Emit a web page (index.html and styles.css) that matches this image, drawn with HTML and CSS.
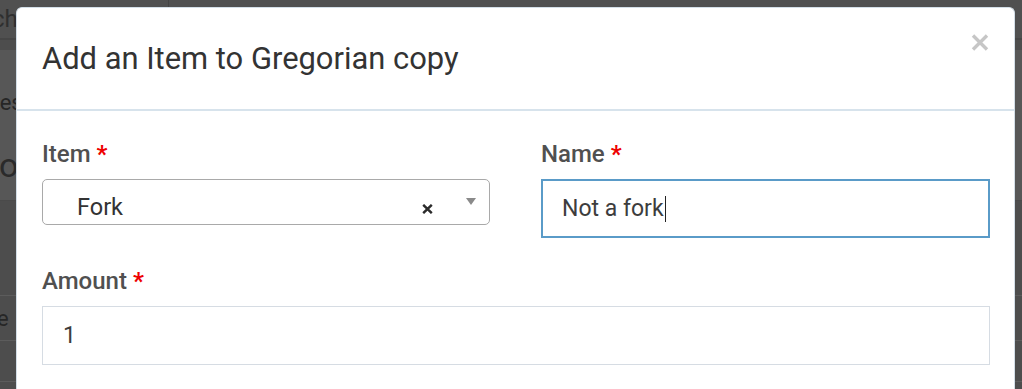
FILE: index.html
```html
<!DOCTYPE html>
<html lang="en">
<head>
<meta charset="utf-8">
<title>Add an Item</title>
<link rel="stylesheet" href="styles.css">
</head>
<body>
<div class="page">
  <div class="bg-top"><span class="bg-search">Search</span><span class="bg-divider"></span></div>
  <div class="bg-gap"></div>
  <div class="bg-band">
    <div class="bg-small">Cases</div>
    <div class="bg-big">Shop</div>
  </div>
  <div class="bg-row"></div>
  <div class="bg-row short"><span class="bg-small">Name</span></div>
  <div class="bg-row last"></div>
</div>

<div class="overlay">
  <div class="modal">
    <div class="modal-header">
      <h1 class="modal-title">Add an Item to Gregorian copy</h1>
      <button class="close" aria-label="Close">
        <svg width="18" height="17" viewBox="0 0 18 17"><path d="M2 1.5 L16 15.5 M16 1.5 L2 15.5" stroke="#c6c6c6" stroke-width="3.4" stroke-linecap="butt"/></svg>
      </button>
    </div>
    <div class="modal-body">
      <div class="form-grid">
        <div class="field">
          <label class="label">Item <span class="req">*</span></label>
          <div class="select">
            <span class="select-value">Fork</span>
            <span class="select-clear">
              <svg width="11" height="10" viewBox="0 0 11 10"><path d="M1.2 0.8 L9.8 9.2 M9.8 0.8 L1.2 9.2" stroke="#2b2b2b" stroke-width="2.4"/></svg>
            </span>
            <span class="select-arrow"></span>
          </div>
        </div>
        <div class="field">
          <label class="label">Name <span class="req">*</span></label>
          <div class="input focused">Not a fork<span class="caret"></span></div>
        </div>
        <div class="field wide">
          <label class="label">Amount <span class="req">*</span></label>
          <div class="input">1</div>
        </div>
      </div>
    </div>
  </div>
</div>
</body>
</html>
```

FILE: styles.css
```css
html, body {
  margin: 0;
  padding: 0;
  height: 100%;
  overflow: hidden;
}
body {
  background: #4d4d4d;
  font-family: Roboto, "Liberation Sans", Arial, sans-serif;
}

/* background page (dimmed) */
.page {
  display: flex;
  flex-direction: column;
  height: 389px;
  overflow: hidden;
}
.bg-top {
  height: 38px;
  flex: none;
  background: #505050;
  border-bottom: 2px solid #464646;
  display: flex;
  align-items: center;
}
.bg-search {
  margin-left: -56px;
  font-size: 24px;
  color: #2f2f2f;
}
.bg-divider {
  margin-left: 150px;
  width: 1px;
  align-self: stretch;
  background: #444;
}
.bg-gap {
  height: 10px;
  flex: none;
}
.bg-band {
  height: 150px;
  flex: none;
  background: #575757;
  border-bottom: 1px solid #4a4a4a;
  display: flex;
  flex-direction: column;
}
.bg-small {
  margin-top: 40px;
  margin-left: -38px;
  font-size: 22px;
  color: #262626;
}
.bg-big {
  margin-top: 30px;
  margin-left: -40px;
  font-size: 34px;
  color: #2a2a2a;
}
.bg-row {
  height: 94px;
  flex: none;
  border-bottom: 1px solid #5c5c5c;
}
.bg-row.short {
  height: 44px;
  display: flex;
  align-items: center;
}
.bg-row.short .bg-small {
  margin-top: 0;
  margin-left: -50px;
}
.bg-row.last {
  height: 40px;
}

/* overlay + modal */
.overlay {
  position: fixed;
  inset: 0;
  padding: 7px 0 0 16px;
  overflow: hidden;
}
.modal {
  width: 999px;
  height: 382px;
  box-sizing: border-box;
  background: #fff;
  border: 1px solid #d3dee7;
  border-bottom: 0;
  border-radius: 6px 6px 0 0;
}
.modal-header {
  height: 103px;
  box-sizing: border-box;
  border-bottom: 2px solid #d7e3ec;
  padding: 0 25px;
  display: flex;
  align-items: center;
  justify-content: space-between;
}
.modal-title {
  margin: 0;
  font-size: 30.9px;
  line-height: 36px;
  font-weight: 400;
  color: #333;
}
.close {
  align-self: flex-start;
  margin-top: 26px;
  padding: 0;
  border: 0;
  background: none;
  width: 18px;
  height: 17px;
  display: block;
}
.close svg {
  display: block;
}
.modal-body {
  padding: 30px 25px 0 25px;
}
.form-grid {
  display: grid;
  grid-template-columns: 448px 449px;
  column-gap: 51px;
  row-gap: 30px;
}
.field.wide {
  grid-column: 1 / 3;
}
.label {
  display: block;
  font-size: 24px;
  line-height: 27px;
  font-weight: 500;
  color: #505050;
  margin-bottom: 11px;
}
.req {
  color: #ee0000;
  font-weight: 700;
}
.select {
  height: 46px;
  box-sizing: border-box;
  border: 1px solid #a9a9a9;
  border-radius: 5px;
  display: flex;
  align-items: flex-start;
  padding: 14px 0 0 34px;
}
.select-value {
  flex: 1;
  font-size: 23.5px;
  line-height: 27px;
  color: #333;
}
.select-clear {
  margin-top: 10px;
  width: 11px;
  height: 10px;
  display: block;
}
.select-clear svg {
  display: block;
}
.select-arrow {
  margin: 4px 13px 0 33px;
  width: 0;
  height: 0;
  border-left: 5.5px solid transparent;
  border-right: 5.5px solid transparent;
  border-top: 7px solid #8a8a8a;
}
.input {
  height: 59px;
  box-sizing: border-box;
  border: 1px solid #d6dce3;
  padding: 0 20px;
  display: flex;
  align-items: center;
  font-size: 23px;
  line-height: 27px;
  color: #3d3d3d;
}
.input.focused {
  border: 2px solid #5a9bc8;
  padding: 0 19px;
}
.caret {
  width: 1px;
  height: 26px;
  background: #222;
  margin-left: 1px;
}
```
